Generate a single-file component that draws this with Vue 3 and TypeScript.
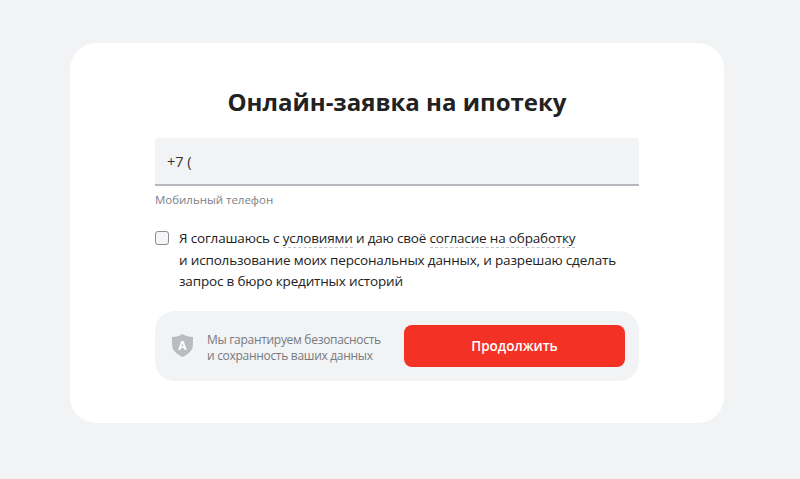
<script setup lang="ts">
const title = 'Онлайн-заявка на ипотеку'
</script>

<template>
  <div class="page">
    <div class="card">
      <h1 class="title">{{ title }}</h1>
      <div class="form">
        <div class="field">+7 (</div>
        <div class="hint">Мобильный телефон</div>
        <label class="consent">
          <span class="box"></span>
          <span class="consent-text">Я соглашаюсь с <span class="link">условиями</span> и даю своё <span class="link">согласие на обработку</span><br>и использование моих персональных данных, и разрешаю сделать<br>запрос в бюро кредитных историй</span>
        </label>
        <div class="footer">
          <svg class="shield" width="21" height="23" viewBox="0 0 21 23">
            <path d="M10.5 0 C13.5 2 17 3 21 3 V10.5 C21 16.5 16 20.5 10.5 23 C5 20.5 0 16.5 0 10.5 V3 C4 3 7.5 2 10.5 0 Z" fill="#b9bcc1"/>
            <text x="10.5" y="16" text-anchor="middle" class="shield-a">A</text>
          </svg>
          <div class="note">Мы гарантируем безопасность<br>и сохранность ваших данных</div>
          <button class="cta">Продолжить</button>
        </div>
      </div>
    </div>
  </div>
</template>

<style>
html, body { margin: 0; background: #f2f3f5; }
</style>

<style scoped>
.page {
  width: 800px;
  height: 479px;
  box-sizing: border-box;
  padding-top: 43px;
  display: flex;
  justify-content: center;
  align-items: flex-start;
  background: #f2f3f5;
  font-family: "Open Sans", "Noto Sans", sans-serif;
  color: #222;
}
.card {
  width: 654px;
  height: 380px;
  margin-left: -6px;
  background: #fff;
  border-radius: 26px;
  box-sizing: border-box;
  padding: 41px 85px 0;
}
.title {
  margin: 0 0 18px;
  font-size: 24px;
  line-height: 36px;
  font-weight: 700;
  text-align: center;
  color: #222;
}
.field {
  height: 48px;
  box-sizing: border-box;
  background: #f2f3f5;
  border-bottom: 2px solid #b5b8bd;
  border-radius: 3px 3px 0 0;
  padding: 0 12px;
  font-size: 14.5px;
  line-height: 48px;
  color: #333;
}
.hint {
  margin-top: 5px;
  font-size: 11.5px;
  line-height: 18px;
  letter-spacing: -0.02px;
  color: #7d8187;
}
.consent {
  margin-top: 19px;
  display: flex;
  gap: 10px;
  font-size: 13.5px;
  line-height: 21.5px;
  letter-spacing: -0.17px;
}
.box {
  flex: none;
  width: 12px;
  height: 12px;
  margin-top: 3px;
  border: 1px solid #8a8d92;
  border-radius: 3px;
  background: #f4f5f6;
}
.link {
  border-bottom: 1px dashed #c2c6cb;
}
.footer {
  margin-top: 18px;
  height: 70px;
  box-sizing: border-box;
  background: #f2f3f5;
  border-radius: 20px;
  display: flex;
  align-items: center;
  padding: 0 14px 0 17px;
}
.shield-a {
  font: 700 12px "Open Sans", sans-serif;
  fill: #fff;
}
.note {
  margin-left: 14px;
  flex: 1;
  padding-top: 4px;
  font-size: 12px;
  line-height: 16px;
  letter-spacing: -0.3px;
  color: #767a80;
}
.cta {
  width: 221px;
  height: 42px;
  border: 0;
  border-radius: 8px;
  background: #f43125;
  color: #fff;
  font: 600 13.5px "Open Sans", sans-serif;
}
</style>
